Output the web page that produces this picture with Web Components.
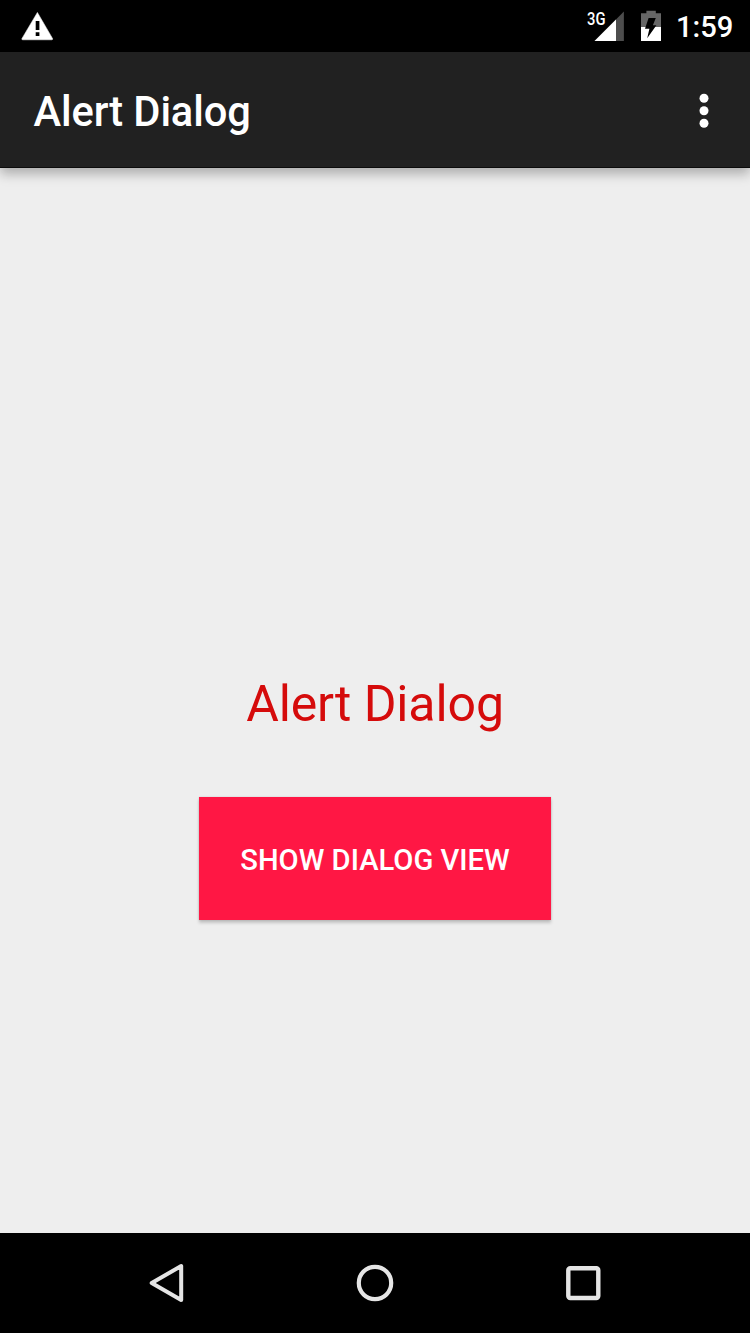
<!DOCTYPE html>
<html lang="en">
<head>
<meta charset="utf-8">
<title>Alert Dialog</title>
<style>
html,body{margin:0;height:100%;overflow:hidden}
body{font-family:Roboto,"Liberation Sans",sans-serif;background:#eee}
</style>
</head>
<body>
<phone-screen>
  <status-bar slot="status" time="1:59"></status-bar>
  <app-bar slot="bar">Alert Dialog</app-bar>
  <message-label>Alert Dialog</message-label>
  <raised-button>SHOW DIALOG VIEW</raised-button>
  <nav-bar slot="nav"></nav-bar>
</phone-screen>
<script>
class Base extends HTMLElement {
  constructor() {
    super();
    this.attachShadow({mode: "open"}).innerHTML = this.constructor.markup;
  }
}

customElements.define("phone-screen", class extends Base {
  static markup = `
  <style>
    :host{display:flex;flex-direction:column;width:750px;height:1333px;background:#eee}
    main{flex:1;display:flex;flex-direction:column;align-items:center;padding-top:506px;gap:63px;box-sizing:border-box}
  </style>
  <slot name="status"></slot><slot name="bar"></slot>
  <main><slot></slot></main>
  <slot name="nav"></slot>`;
});

customElements.define("status-bar", class extends Base {
  static markup = `
  <style>
    :host{display:flex;flex:none;height:52px;background:#000;color:#fff;align-items:stretch}
    svg{display:block;flex:none}
    .space{flex:1}
    .net{display:grid}
    .net>*{grid-area:1/1}
    .net span{font-size:17.6px;font-weight:500;line-height:18px;margin:10px 0 0 1px;transform:scaleX(.84);transform-origin:0 0;justify-self:start}
    time{font-size:29.17px;font-weight:500;line-height:52px;padding-top:1px;width:74px;letter-spacing:0}
  </style>
  <svg width="60" height="52" viewBox="0 0 60 52"><path d="M37.4 12.4 52.5 38.4Q53 39.8 51.7 39.8H22.8Q21.4 39.8 22 38.4Z" fill="#fff" stroke="#fff" stroke-width=".5"/><path d="M35.7 20.9h3.7v9.2h-3.7zM35.7 32.2h3.7V36h-3.7z" fill="#000"/></svg>
  <span class="space"></span>
  <div class="net">
    <svg width="90" height="52" viewBox="0 0 90 52">
      <path d="M37.9 11.5V41H8.5Z" fill="#4d4d4d"/><path d="M30 19.4V41H8.5Z" fill="#fff"/>
      <path d="M55 13.3h5.4v-2.6h9.4v2.6H75V27H55Z" fill="#666"/><path d="M55 27h20v14H55Z" fill="#fff"/>
      <path d="M62.6 18H69.8L66.9 25.2H70.4L61.2 38.2 63.4 28.8H59Z" fill="#000"/>
    </svg>
    <span>3G</span>
  </div>
  <time></time>`;
  connectedCallback() { this.shadowRoot.querySelector("time").textContent = this.getAttribute("time"); }
});

customElements.define("app-bar", class extends Base {
  static markup = `
  <style>
    :host{display:flex;flex:none;box-sizing:border-box;height:116px;padding:0 36px 0 33.5px;background:#212121;color:#fff;align-items:center;justify-content:space-between;box-shadow:0 6px 11px rgba(0,0,0,.27);border-bottom:1px solid #0c0c0c}
    h1{margin:0;padding-top:5px;font-size:41.67px;font-weight:500;line-height:50px;letter-spacing:-.12px;white-space:nowrap}
    svg{display:block}
  </style>
  <h1><slot></slot></h1>
  <svg width="20" height="50" viewBox="0 0 20 50" fill="#fff"><circle cx="10" cy="13.2" r="4.5"/><circle cx="10" cy="25.7" r="4.5"/><circle cx="10" cy="38.2" r="4.5"/></svg>`;
});

customElements.define("message-label", class extends Base {
  static markup = `
  <style>:host{display:block;font-size:50px;line-height:60px;letter-spacing:-.12px;color:#d50b0b;white-space:nowrap}</style>
  <slot></slot>`;
});

customElements.define("raised-button", class extends Base {
  static markup = `
  <style>
    :host{display:block}
    button{display:block;box-sizing:border-box;width:352px;height:122.5px;margin:0;padding:4px 0 0;border:0;background:#ff1744;color:#fff;font:500 29.17px/40px Roboto,"Liberation Sans",sans-serif;white-space:nowrap;box-shadow:0 3px 3px rgba(0,0,0,.18),0 0 2px rgba(0,0,0,.14)}
  </style>
  <button><slot></slot></button>`;
});

customElements.define("nav-bar", class extends Base {
  static markup = `
  <style>
    :host{display:flex;flex:none;box-sizing:border-box;height:100px;padding:0 62.5px;background:#000;align-items:center}
    span{flex:1;display:flex;justify-content:center}
    svg{display:block}
  </style>
  <span><svg width="50" height="50" viewBox="0 0 50 50" fill="none" stroke="#e5e5e5" stroke-width="4" stroke-linejoin="round"><path d="M9.7 25 39.2 8V42Z"/></svg></span>
  <span><svg width="50" height="50" viewBox="0 0 50 50" fill="none" stroke="#e5e5e5" stroke-width="4.2"><circle cx="25" cy="25" r="16.2"/></svg></span>
  <span><svg width="50" height="50" viewBox="0 0 50 50" fill="none" stroke="#e5e5e5" stroke-width="4.4"><rect x="10.3" y="10.3" width="30" height="29.7" rx="2"/></svg></span>`;
});
</script>
</body>
</html>
